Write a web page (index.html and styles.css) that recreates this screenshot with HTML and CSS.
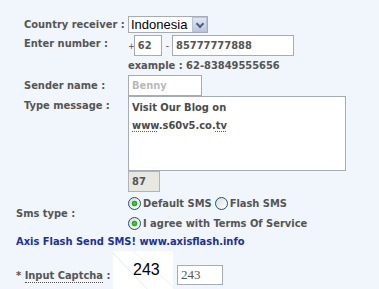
FILE: index.html
```html
<!DOCTYPE html>
<html>
  <head>
    <meta charset="utf-8">
    <title>Send SMS</title>
    <link rel="stylesheet" href="styles.css">
  </head>
  <body>
    <form id='sms-form'>
      <div class='row row-country'>
        <label class='field-label' for='country'>Country receiver :</label>
        <span class='select-box'>
          <select id='country' class='country'>
            <option>Indonesia</option>
          </select>
          <span class='select-button'></span>
        </span>
      </div>

      <div class='row row-number'>
        <label class='field-label' for='number'>Enter number :</label>
        <span class='plain plus'>+</span>
        <input class='text-box code' type='text' value='62'/>
        <span class='plain dash'>-</span>
        <input id='number' class='text-box number' type='text' value='85777777888'/>
      </div>

      <div class='row row-example'>
        <span class='field-label'></span>
        <span class='example'>example : 62-83849555656</span>
      </div>

      <div class='row row-sender'>
        <label class='field-label' for='sender'>Sender name :</label>
        <input id='sender' class='text-box sender' type='text' placeholder='Benny'/>
      </div>

      <div class='row row-message'>
        <label class='field-label'>Type message :</label>
        <div class='message' contenteditable='true' spellcheck='false'>Visit Our Blog on<br/><span class='typo'>www</span>.s60v5.co.<span class='typo'>tv</span></div>
      </div>

      <div class='row row-counter'>
        <span class='field-label'></span>
        <input class='counter' type='text' value='87' readonly/>
      </div>

      <div class='row row-type'>
        <span class='field-label'>Sms type :</span>
        <div class='choices'>
          <div class='choice'>
            <input type='radio' id='type-default' name='sms-type' checked/>
            <label for='type-default'>Default SMS</label>
            <input type='radio' id='type-flash' name='sms-type'/>
            <label for='type-flash'>Flash SMS</label>
          </div>
          <div class='choice'>
            <input type='radio' id='agree' name='agree' checked/>
            <label for='agree'>I agree with Terms Of Service</label>
          </div>
        </div>
      </div>

      <div class='promo'>Axis Flash Send SMS! www.axisflash.info</div>

      <div class='row row-captcha'>
        <label class='field-label' for='captcha'>* <span class='hint'>Input Captcha</span> :</label>
        <div class='captcha-image'>
          <svg width='60' height='44' viewBox='0 0 60 44'>
            <line x1='0' y1='2' x2='40' y2='44' stroke='#e4e8ee' stroke-width='1'/>
            <line x1='20' y1='0' x2='60' y2='36' stroke='#eceff3' stroke-width='1'/>
          </svg>
          <span class='captcha-text'>243</span>
        </div>
        <input id='captcha' class='text-box captcha' type='text' value='243'/>
      </div>
    </form>
  </body>
</html>
```

FILE: styles.css
```css
* {
  box-sizing: border-box;
}
body {
  margin: 0;
  background-color: #f1f5fc;
  font-family: 'DejaVu Sans Condensed', 'DejaVu Sans', sans-serif;
  font-size: 11px;
  font-weight: bold;
  color: #555555;
}
#sms-form {
  padding-top: 16px;
}
.row {
  display: flex;
  align-items: center;
}
.field-label {
  width: 128px;
  flex-shrink: 0;
  padding-left: 24px;
  color: #555555;
}
.row-type .field-label,
.row-captcha .field-label {
  padding-left: 16px;
}

/* country select, xp style */
.select-box {
  position: relative;
  display: inline-block;
  height: 17px;
}
.country {
  appearance: none;
  width: 80px;
  height: 17px;
  padding: 0 0 0 2px;
  border: 1px solid #a5acb5;
  background: white;
  font-family: 'Liberation Sans', Arial, sans-serif;
  font-size: 13px;
  font-weight: normal;
  color: black;
}
.select-button {
  position: absolute;
  top: 1px;
  right: 1px;
  width: 15px;
  height: 15px;
  background: linear-gradient(#dfe6f3, #bcc8df);
  border: 1px solid #b9c4d8;
}
.select-button::after {
  content: '';
  position: absolute;
  left: 4px;
  top: 3px;
  width: 4px;
  height: 4px;
  border-right: 2px solid #4d6185;
  border-bottom: 2px solid #4d6185;
  transform: rotate(45deg);
}

.row-number {
  margin-top: 2px;
  height: 21px;
}
.row-number .field-label {
  margin-top: -4px;
}
.plain {
  font-weight: normal;
  font-size: 10px;
  color: #555555;
}
.plus {
  font-size: 9px;
  margin-right: -1px;
}
.dash {
  margin: 0 3px 0 4px;
}
.text-box {
  height: 21px;
  border: 1px solid #a5acb5;
  background: white;
  padding: 0 3px;
  font-family: inherit;
  font-size: 11px;
  font-weight: bold;
  color: #555555;
}
.code {
  width: 28px;
}
.number {
  width: 122px;
}
.row-example {
  height: 19px;
}
.row-sender {
  height: 21px;
}
.sender {
  width: 74px;
  height: 21px;
}
.sender::placeholder {
  color: #b9b9b9;
}
.row-message {
  align-items: flex-start;
}
.row-message .field-label {
  padding-top: 3px;
}
.message {
  width: 218px;
  height: 75px;
  padding: 2px 3px;
  border: 1px solid #a5acb5;
  background: white;
  line-height: 18px;
  color: #4a4a4a;
  outline: none;
}
.typo {
  text-decoration: underline dotted #c0392b;
  text-underline-offset: 2px;
}
.counter {
  width: 32px;
  height: 21px;
  padding: 0 3px;
  border: 1px solid #b3b3b3;
  background: #e8e8e3;
  font-family: inherit;
  font-size: 11px;
  font-weight: bold;
  color: #555555;
}
.row-type {
  margin-top: 2px;
}
.choice {
  display: flex;
  align-items: center;
  height: 19px;
}
.choice + .choice {
  height: 20px;
}
.choice label {
  margin-left: 2px;
  margin-right: 3px;
}
input[type=radio] {
  appearance: none;
  width: 13px;
  height: 13px;
  margin: 0;
  border: 1px solid #1c5180;
  border-radius: 50%;
  background: linear-gradient(135deg, #dcdcd6, #ffffff);
}
input[type=radio]:checked {
  background: radial-gradient(circle, #55d346 0, #21a121 2.5px, transparent 3.2px),
              linear-gradient(135deg, #dcdcd6, #ffffff);
}
.promo {
  padding-left: 16px;
  height: 18px;
  line-height: 18px;
  color: #1b31a0;
}
.row-captcha {
  align-items: flex-start;
  height: 41px;
}
.row-captcha .field-label {
  padding-top: 18px;
}
.hint {
  border-bottom: 1px dotted #555555;
}
.captcha-image {
  position: relative;
  width: 60px;
  height: 44px;
  margin-left: -15px;
  background: white;
  overflow: hidden;
}
.captcha-image svg {
  display: block;
}
.captcha-text {
  position: absolute;
  left: 20px;
  top: 10px;
  font-family: 'Liberation Sans', Arial, sans-serif;
  font-size: 16px;
  font-weight: normal;
  color: black;
}
.captcha {
  width: 46px;
  height: 20px;
  margin-left: 4px;
  margin-top: 14px;
  font-family: 'Liberation Serif', serif;
  font-weight: normal;
  font-size: 13px;
}
```
